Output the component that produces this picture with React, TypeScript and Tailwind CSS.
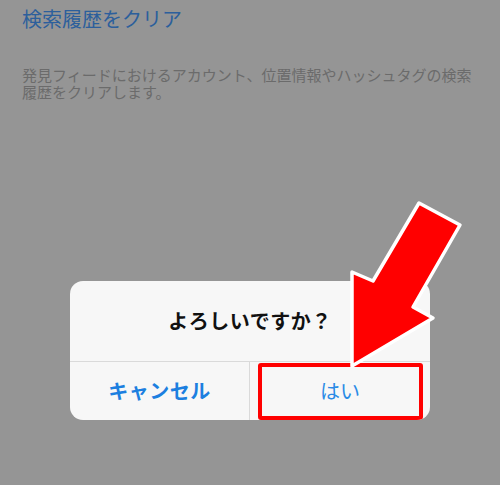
import React from 'react';

const font = { fontFamily: '"Noto Sans CJK JP", "Noto Sans", sans-serif' };

const Arrow: React.FC = () => (
  <svg
    className="absolute inset-0 pointer-events-none"
    width={500}
    height={485}
    viewBox="0 0 500 485"
  >
    <polygon
      points="419,203 460,225 413,307 433,318 352,366 352,272 373,281"
      fill="#ff0000"
      stroke="#ffffff"
      strokeWidth={3.5}
      strokeLinejoin="round"
    />
  </svg>
);

const App: React.FC = () => {
  return (
    <div className="relative w-[500px] h-[485px] bg-[#959595] overflow-hidden" style={font}>
      {/* settings section behind the alert */}
      <div className="px-[22px] pt-[5px]">
        <h1 className="text-[20px] leading-[28px] text-[#2c5f9c]">検索履歴をクリア</h1>
        <p className="mt-[33px] text-[15px] leading-[17px] text-[#6b6b6b]">
          発見フィードにおけるアカウント、位置情報やハッシュタグの検索
          <br />
          履歴をクリアします。
        </p>
      </div>

      {/* alert */}
      <div className="mx-auto mt-[181px] w-[360px] h-[139px] rounded-[13px] bg-[#f7f7f7] flex flex-col overflow-hidden">
        <div className="h-[80px] flex items-center justify-center">
          <span className="text-[20px] font-bold text-[#111] tracking-[0.5px]">よろしいですか？</span>
        </div>
        <div className="flex-1 flex border-t border-[#dadada]">
          <button className="w-[180px] flex items-center justify-center border-r border-[#dadada] text-[20px] font-bold text-[#1c7fe0] tracking-[0.5px]">
            キャンセル
          </button>
          <button className="relative flex-1 flex items-center justify-center text-[20px] text-[#2a8be6]">
            はい
            <span className="absolute left-[8px] right-[7px] top-[1px] bottom-0 border-[4px] border-[#ff0000] rounded-[3px]" />
          </button>
        </div>
      </div>

      <Arrow />
    </div>
  );
};

export default App;
